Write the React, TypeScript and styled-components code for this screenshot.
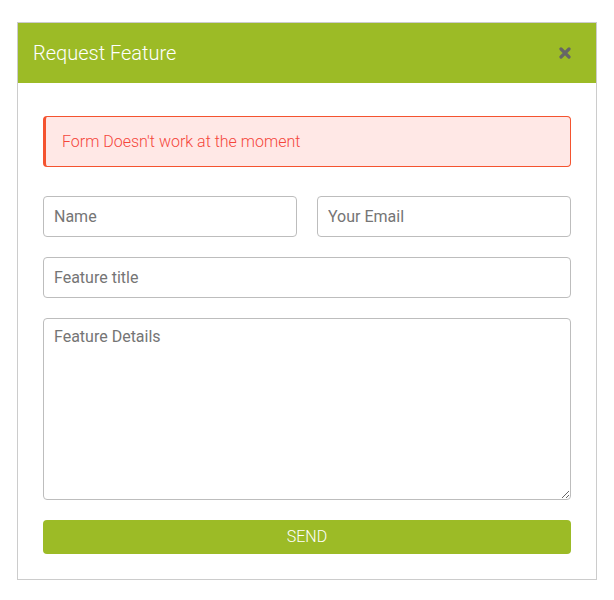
import React from 'react';
import styled, { createGlobalStyle } from 'styled-components';

const green = '#9cbb26';

const GlobalStyle = createGlobalStyle`
  body {
    margin: 0;
    background: #ffffff;
    font-family: Roboto, "Liberation Sans", sans-serif;
  }
`;

const Page = styled.div`
  padding: 22px 17px;
`;

const Panel = styled.div`
  width: 580px;
  box-sizing: border-box;
  border: 1px solid #cccccc;
  background: #ffffff;
`;

const Header = styled.div`
  height: 60px;
  background: ${green};
  display: flex;
  align-items: center;
  justify-content: space-between;
  padding: 0 25px 0 15px;
`;

const Title = styled.h2`
  margin: 0;
  font-size: 20px;
  font-weight: 300;
  color: #ffffff;
`;

const Close = styled.button`
  border: 0;
  background: none;
  padding: 0;
  width: 12px;
  height: 12px;
  display: flex;
  cursor: pointer;
`;

const Body = styled.form`
  padding: 33px 25px 25px 25px;
  display: flex;
  flex-direction: column;
  gap: 20px;
`;

const Alert = styled.div`
  height: 51px;
  box-sizing: border-box;
  border: 1px solid #f4532f;
  border-left: 3px solid #f4532f;
  border-radius: 4px;
  background: #ffe8e6;
  color: #f5463b;
  font-size: 16px;
  font-weight: 300;
  display: flex;
  align-items: center;
  padding-left: 16px;
  margin-bottom: 9px;
`;

const Row = styled.div`
  display: flex;
  gap: 20px;
`;

const Input = styled.input`
  flex: none;
  min-width: 0;
  height: 41px;
  box-sizing: border-box;
  border: 1px solid #bdbdbd;
  border-radius: 4px;
  padding: 0 10px;
  font-family: Roboto, "Liberation Sans", sans-serif;
  font-size: 16px;
  color: #333333;
  &::placeholder {
    color: #757575;
  }
  ${Row} > & {
    flex: 1;
  }
`;

const TextArea = styled.textarea`
  flex: none;
  height: 182px;
  box-sizing: border-box;
  border: 1px solid #bdbdbd;
  border-radius: 4px;
  padding: 8px 10px;
  font-family: Roboto, "Liberation Sans", sans-serif;
  font-size: 16px;
  color: #333333;
  resize: vertical;
  &::placeholder {
    color: #757575;
  }
`;

const Send = styled.button`
  flex: none;
  height: 34px;
  border: 0;
  border-radius: 4px;
  padding: 0 0 2px;
  background: ${green};
  color: #ffffff;
  font-family: Roboto, "Liberation Sans", sans-serif;
  font-size: 16px;
  font-weight: 300;
  cursor: pointer;
`;

export default function App() {
  return (
    <Page>
      <GlobalStyle />
      <Panel>
        <Header>
          <Title>Request Feature</Title>
          <Close type="button" aria-label="close">
            <svg width="12" height="12" viewBox="0 0 12 12">
              <path
                d="M2 2 L10 10 M10 2 L2 10"
                stroke="#666666"
                strokeWidth="3.2"
                strokeLinecap="round"
              />
            </svg>
          </Close>
        </Header>
        <Body onSubmit={(e) => e.preventDefault()}>
          <Alert>Form Doesn't work at the moment</Alert>
          <Row>
            <Input placeholder="Name" />
            <Input placeholder="Your Email" />
          </Row>
          <Input placeholder="Feature title" />
          <TextArea placeholder="Feature Details" />
          <Send type="submit">SEND</Send>
        </Body>
      </Panel>
    </Page>
  );
}
